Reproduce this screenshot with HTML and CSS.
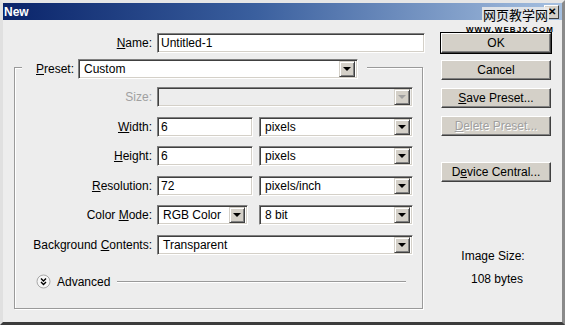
FILE: index.html
```html
<!DOCTYPE html>
<html>
<head>
<meta charset="utf-8">
<link rel="stylesheet" href="styles.css">
</head>
<body>
<div class="window">
  <div class="titlebar">
    <span class="title">New</span>
    <span class="close">✕</span>
  </div>
  <div class="watermark">
    <div class="wm-cn">网页教学网</div>
    <div class="wm-en">WWW.WEBJX.COM</div>
  </div>
  <div class="content">
    <div class="left">
      <div class="row name-row">
        <span class="lbl"><u>N</u>ame:</span>
        <div class="field w268">Untitled-1</div>
      </div>
      <div class="group">
        <div class="legend">
          <span class="lbl-plain"><u>P</u>reset:</span>
          <div class="select w280"><span class="val">Custom</span><span class="arrow"></span></div>
        </div>
        <div class="rows">
          <div class="row">
            <span class="lbl dis">Size:</span>
            <div class="select disabled w256"><span class="val"></span><span class="arrow"></span></div>
          </div>
          <div class="row">
            <span class="lbl"><u>W</u>idth:</span>
            <div class="field w96">6</div>
            <div class="select w154"><span class="val">pixels</span><span class="arrow"></span></div>
          </div>
          <div class="row">
            <span class="lbl"><u>H</u>eight:</span>
            <div class="field w96">6</div>
            <div class="select w154"><span class="val">pixels</span><span class="arrow"></span></div>
          </div>
          <div class="row">
            <span class="lbl"><u>R</u>esolution:</span>
            <div class="field w96">72</div>
            <div class="select w154"><span class="val">pixels/inch</span><span class="arrow"></span></div>
          </div>
          <div class="row">
            <span class="lbl">Color <u>M</u>ode:</span>
            <div class="select w91"><span class="val">RGB Color</span><span class="arrow"></span></div>
            <div class="select w154 ml11"><span class="val">8 bit</span><span class="arrow"></span></div>
          </div>
          <div class="row">
            <span class="lbl">Background <u>C</u>ontents:</span>
            <div class="select w256"><span class="val">Transparent</span><span class="arrow"></span></div>
          </div>
        </div>
        <div class="advanced">
          <svg class="adv-icon" width="15" height="15" viewBox="0 0 15 15">
            <circle cx="7.5" cy="7.5" r="6.5" fill="#f6f6f6" stroke="#a8a8a8"/>
            <polyline points="5,4.5 7.5,7 10,4.5" fill="none" stroke="#000" stroke-width="1.4"/>
            <polyline points="5,8 7.5,10.5 10,8" fill="none" stroke="#000" stroke-width="1.4"/>
          </svg>
          <span class="adv-text">Advanced</span>
          <span class="adv-line"></span>
        </div>
      </div>
    </div>
    <div class="right">
      <div class="btn default">OK</div>
      <div class="btn mt7">Cancel</div>
      <div class="btn mt8"><u>S</u>ave Preset...</div>
      <div class="btn mt8 disabled-btn"><u>D</u>elete Preset...</div>
      <div class="btn mt26">D<u>e</u>vice Central...</div>
      <div class="info">
        <div class="info-line">Image Size:</div>
        <div class="info-line size">108 bytes</div>
      </div>
    </div>
  </div>
</div>
</body>
</html>
```

FILE: styles.css
```css
html, body {
  margin: 0;
  padding: 0;
  background: #ececec;
}

body {
  font-family: "Liberation Sans", Arial, sans-serif;
  font-size: 12px;
  color: #000;
}

.window {
  position: relative;
  width: 565px;
  height: 325px;
  box-sizing: border-box;
  background: #ededed;
  border-style: solid;
  border-width: 3px 3px 3px 3px;
  border-color: #e6e6e6 #8a8a8a #3c3c3c #e0e0e0;
  overflow: hidden;
}

.titlebar {
  height: 17px;
  background: linear-gradient(to right, #0a246a 0%, #3a5f9e 45%, #a6c0e0 100%);
  display: flex;
  align-items: center;
  justify-content: space-between;
}

.title {
  color: #fff;
  font-weight: bold;
  font-size: 12px;
  padding-left: 1px;
}

.close {
  width: 13px;
  height: 12px;
  margin-right: 3px;
  background: #d4d0c8;
  border: 1px solid;
  border-color: #fff #404040 #404040 #fff;
  font-size: 10px;
  line-height: 12px;
  text-align: center;
  font-weight: bold;
}

.watermark {
  position: absolute;
  right: 7px;
  top: 4px;
  display: flex;
  flex-direction: column;
  align-items: flex-end;
}

.wm-cn {
  font-family: "Noto Sans CJK SC", sans-serif;
  font-size: 13px;
  line-height: 15px;
  color: #000;
  background: rgba(236, 236, 236, 0.85);
  padding: 0 1px;
  margin-right: 6px;
}

.wm-en {
  font-family: "Liberation Sans", Arial, sans-serif;
  font-weight: bold;
  font-size: 8px;
  line-height: 9px;
  letter-spacing: 1.1px;
  color: #000;
  margin-top: 3px;
  margin-right: 1px;
}

.content {
  display: flex;
}

.left {
  width: 438px;
}

.row {
  display: flex;
  align-items: center;
  height: 20px;
}

.lbl {
  width: 137px;
  text-align: right;
  margin-right: 5px;
  white-space: nowrap;
}

.name-row {
  margin-top: 13px;
}

.name-row .lbl {
  width: 149px;
}

.lbl.dis {
  color: #a0a0a0;
}

.field {
  height: 20px;
  box-sizing: border-box;
  background: #fff;
  border: 1px solid;
  border-color: #808080 #fff #fff #808080;
  box-shadow: inset 1px 1px #404040, inset -1px -1px #d4d0c8;
  padding: 0 3px;
  line-height: 18px;
  white-space: nowrap;
}

.select {
  height: 20px;
  box-sizing: border-box;
  background: #fff;
  border: 1px solid;
  border-color: #808080 #fff #fff #808080;
  box-shadow: inset 1px 1px #404040, inset -1px -1px #d4d0c8;
  padding: 2px 2px 2px 5px;
  display: flex;
  align-items: center;
  justify-content: space-between;
}

.select .val {
  line-height: 16px;
  white-space: nowrap;
}

.select .arrow {
  width: 16px;
  height: 16px;
  box-sizing: border-box;
  background: #d4d0c8;
  border: 1px solid;
  border-color: #d4d0c8 #404040 #404040 #d4d0c8;
  box-shadow: inset 1px 1px #fff, inset -1px -1px #808080;
  position: relative;
  flex: none;
}

.select .arrow::after {
  content: "";
  position: absolute;
  left: 3px;
  top: 5px;
  border-left: 4px solid transparent;
  border-right: 4px solid transparent;
  border-top: 4px solid #000;
}

.select.disabled {
  background: #ededed;
}

.select.disabled .arrow::after {
  border-top-color: #a0a0a0;
}

.w268 { width: 268px; }
.w280 { width: 280px; }
.w256 { width: 256px; }
.w96 { width: 96px; }
.w154 { width: 154px; margin-left: 6px; }
.w91 { width: 91px; }
.ml11 { margin-left: 11px; }

.group {
  margin-top: 14px;
  margin-left: 11px;
  width: 409px;
  height: 242px;
  box-sizing: border-box;
  border: 1px solid #9a9a9a;
  box-shadow: inset 1px 1px #fff, 1px 1px #fff;
}

.legend {
  display: flex;
  align-items: center;
  width: fit-content;
  margin-top: -9px;
  margin-left: 7px;
  padding: 0 9px 0 14px;
  background: #ededed;
  height: 20px;
}

.lbl-plain {
  margin-right: 4px;
}

.rows {
  display: flex;
  flex-direction: column;
  gap: 9.5px;
  margin-top: 8px;
}

.advanced {
  display: flex;
  align-items: center;
  margin-top: 19px;
  padding-left: 21px;
  height: 16px;
}

.adv-icon {
  flex: none;
}

.adv-text {
  margin-left: 6px;
}

.adv-line {
  width: 289px;
  margin-left: 7px;
  height: 0;
  border-top: 1px solid #9a9a9a;
  border-bottom: 1px solid #fff;
}

.right {
  width: 110px;
  padding-top: 13px;
  display: flex;
  flex-direction: column;
}

.btn {
  height: 20px;
  box-sizing: border-box;
  background: #d4d0c8;
  border: 1px solid;
  border-color: #fff #404040 #404040 #fff;
  box-shadow: inset -1px -1px #808080;
  text-align: center;
  line-height: 18px;
  white-space: nowrap;
}

.btn.default {
  outline: 1px solid #000;
}

.btn.disabled-btn {
  color: #a0a0a0;
  text-shadow: 1px 1px #fff;
}

.mt7 { margin-top: 7px; }
.mt8 { margin-top: 8px; }
.mt26 { margin-top: 26px; }

.info {
  margin-top: 67px;
  text-align: center;
  padding-right: 6px;
}

.info-line {
  line-height: 14px;
}

.info-line.size {
  margin-top: 9px;
  padding-left: 8px;
}
```
